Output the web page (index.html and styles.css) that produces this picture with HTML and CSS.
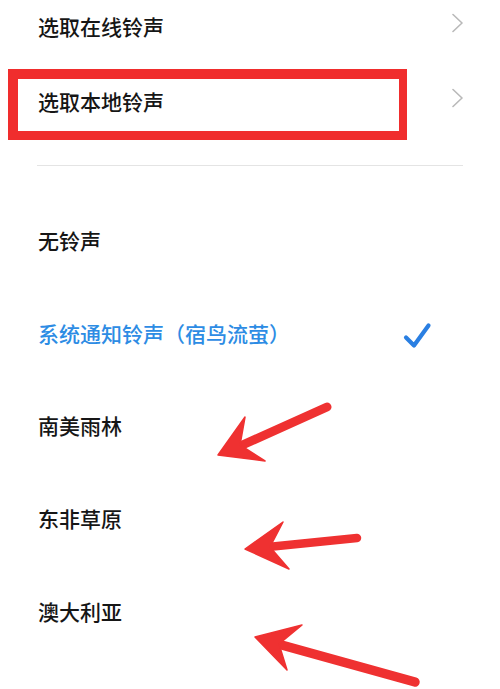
FILE: index.html
```html
<!DOCTYPE html>
<html lang="zh-CN">
<head>
<meta charset="utf-8">
<title>铃声</title>
<link rel="stylesheet" href="styles.css">
</head>
<body>
<div class="page">
  <div class="top-list">
    <div class="row nav-row">
      <span class="label">选取在线铃声</span>
      <svg class="chev" width="12" height="28" viewBox="0 0 12 28"><polyline points="1,1.5 10,10 1,18.5" fill="none" stroke="#b9b9b9" stroke-width="1.6" stroke-linecap="round" stroke-linejoin="round"/></svg>
    </div>
    <div class="row nav-row highlighted">
      <span class="label">选取本地铃声</span>
      <svg class="chev" width="12" height="28" viewBox="0 0 12 28"><polyline points="1,1.5 10,10 1,18.5" fill="none" stroke="#b9b9b9" stroke-width="1.6" stroke-linecap="round" stroke-linejoin="round"/></svg>
      <div class="red-box"></div>
    </div>
  </div>
  <div class="divider"></div>
  <div class="sound-list">
    <div class="row sound-row"><span class="label">无铃声</span></div>
    <div class="row sound-row selected">
      <span class="label">系统通知铃声（宿鸟流萤）</span>
      <svg class="check" width="30" height="36" viewBox="0 0 30 36"><polyline points="3,22.5 11,30.5 25.5,10.5" fill="none" stroke="#2a7fe2" stroke-width="4.2" stroke-linecap="round" stroke-linejoin="round"/></svg>
    </div>
    <div class="row sound-row"><span class="label">南美雨林</span></div>
    <div class="row sound-row"><span class="label">东非草原</span></div>
    <div class="row sound-row"><span class="label">澳大利亚</span></div>
  </div>
  <svg class="arrows" width="500" height="689" viewBox="0 0 500 689">
    <g fill="#ef3131" stroke="#ef3131" stroke-linecap="round" stroke-linejoin="round">
      <line x1="327" y1="407" x2="238" y2="447" stroke-width="9"/>
      <polygon points="218,455 245,417 240,445 265,461" stroke-width="1.5"/>
      <line x1="357" y1="538" x2="268" y2="547" stroke-width="8.5"/>
      <polygon points="245,549 283,522 270,547 289,569" stroke-width="1.5"/>
      <line x1="415" y1="682" x2="278" y2="644" stroke-width="9.5"/>
      <polygon points="255,637 302,625 279,644 287,670" stroke-width="1.5"/>
    </g>
  </svg>
</div>
</body>
</html>
```

FILE: styles.css
```css
html, body {
  margin: 0;
  padding: 0;
  background: #ffffff;
}

.page {
  position: relative;
  width: 500px;
  height: 689px;
  overflow: hidden;
  font-family: "Noto Sans CJK SC", "Noto Sans", sans-serif;
  font-weight: 500;
  font-size: 21px;
  color: #161616;
}

.top-list {
  margin-top: -11px;
}

.row {
  display: flex;
  align-items: center;
  justify-content: space-between;
  box-sizing: border-box;
}

.label {
  line-height: 1;
  white-space: nowrap;
}

.nav-row {
  position: relative;
  height: 75px;
  padding: 0 36px 0 38px;
}

.chev {
  display: block;
}

.red-box {
  position: absolute;
  top: 5px;
  left: 8px;
  width: 399px;
  height: 71px;
  box-sizing: border-box;
  border-style: solid;
  border-color: #f02d2d;
  border-width: 10px 8px 9px 10px;
}

.divider {
  height: 1px;
  margin: 26px 37px 0 37px;
  background: #e4e4e4;
}

.sound-list {
  margin-top: 28px;
}

.sound-row {
  height: 92.75px;
  padding: 0 67px 0 38px;
}

.sound-row.selected {
  color: #2d8ce4;
}

.check {
  display: block;
}

.arrows {
  position: absolute;
  top: 0;
  left: 0;
  pointer-events: none;
}
```
